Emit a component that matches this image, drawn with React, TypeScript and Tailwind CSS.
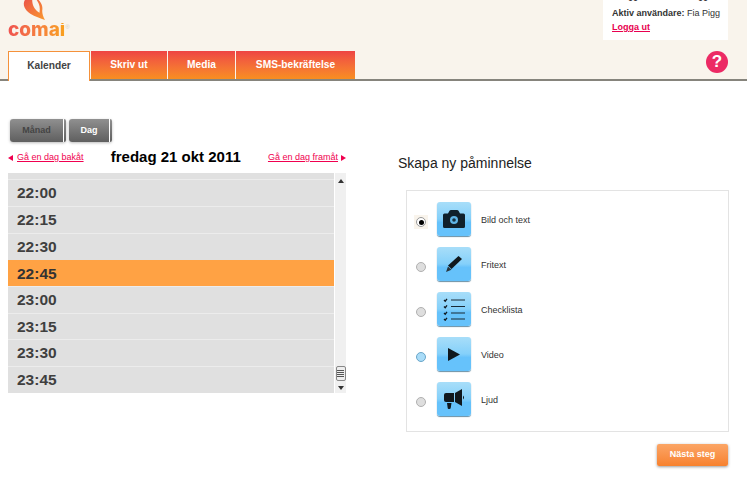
const times = [
  { t: "22:00", h: "h-[27px]" },
  { t: "22:15", h: "h-[27px]" },
  { t: "22:30", h: "h-[27px]" },
  { t: "22:45", h: "h-[26px]", active: true },
  { t: "23:00", h: "h-[27px]" },
  { t: "23:15", h: "h-[26px]" },
  { t: "23:30", h: "h-[27px]" },
  { t: "23:45", h: "h-[27px]" },
];

function CameraIcon() {
  return (
    <svg width="22" height="18" viewBox="0 0 22 18">
      <path d="M0 5q0-1.500 1.500-1.500h3.500L6.500.8Q7 0 8 0h6q1 0 1.500.8L17 3.500h3.500Q22 3.500 22 5v11.500q0 1.500-1.500 1.500h-19Q0 18 0 16.500z" fill="#10202b" />
      <circle cx="11" cy="10" r="4" fill="#5fb4e6" />
      <circle cx="11" cy="10" r="1.800" fill="#17303f" />
    </svg>
  );
}

function PenIcon() {
  return (
    <svg width="16" height="16" viewBox="0 0 16 16">
      <path d="M12.500 0L16 3 5.500 13 2 9.500z" fill="#10181d" />
      <path d="M2 10.500l3.500 3.200L0 16z" fill="#2a363d" />
    </svg>
  );
}

function ListIcon() {
  return (
    <svg width="22" height="24" viewBox="0 0 22 24" fill="none">
      <path d="M8 3h14M8 9.500h14M8 16h14M8 22h14" stroke="#1a2a35" strokeWidth="1" />
      <path d="M1 3l1.200 1.200L4 1.800M1 9.500l1.200 1.200L4 8.300M1 16l1.200 1.200L4 14.800M1 22l1.200 1.200L4 20.800" stroke="#10181d" strokeWidth="1.300" />
    </svg>
  );
}

function PlayIcon() {
  return (
    <svg width="12" height="13" viewBox="0 0 12 13">
      <path d="M0 0l12 6.500L0 13z" fill="#10181d" />
    </svg>
  );
}

function HornIcon() {
  return (
    <svg width="21" height="20" viewBox="0 0 21 20">
      <path d="M0 6q0-2 2-2h8v9H2q-2 0-2-2z" fill="#10181d" />
      <path d="M11 4l7-4v17l-7-4z" fill="#10181d" />
      <path d="M19 6.500q2 2 0 4z" fill="#10181d" />
      <path d="M3 14h4.500l-.8 5q-.2 1-1.200 1h-.8q-1 0-1-1z" fill="#10181d" />
    </svg>
  );
}

const options = [
  { label: "Bild och text", icon: <CameraIcon />, state: "checked" },
  { label: "Fritext", icon: <PenIcon />, state: "" },
  { label: "Checklista", icon: <ListIcon />, state: "" },
  { label: "Video", icon: <PlayIcon />, state: "hover" },
  { label: "Ljud", icon: <HornIcon />, state: "" },
];

function Radio({ state }: { state: string }) {
  if (state === "checked") {
    return (
      <span className="w-[14px] h-[14px] bg-[#f9f4ec] flex items-center justify-center">
        <span className="w-[10px] h-[10px] rounded-full bg-white border border-[#999] flex items-center justify-center">
          <span className="w-[5px] h-[5px] rounded-full bg-black" />
        </span>
      </span>
    );
  }
  return (
    <span className="w-[14px] h-[14px] flex items-center justify-center">
      <span
        className={
          state === "hover"
            ? "w-[10px] h-[10px] rounded-full border border-[#6aa6c9] bg-[#a9dcf8]"
            : "w-[10px] h-[10px] rounded-full border border-[#b0b0b0] bg-[#dedede]"
        }
      />
    </span>
  );
}

function ToggleButton({ label, width, textColor }: { label: string; width: string; textColor: string }) {
  return (
    <div className="flex h-[23px] rounded-[3px] shadow-[0_1px_3px_#bbb]">
      <span className={`${width} rounded-l-[3px] bg-gradient-to-b from-[#909090] to-[#5f5f5f] flex items-center justify-center text-[9px] font-bold ${textColor}`}>
        {label}
      </span>
      <span className="ml-[1px] w-[2px] rounded-r-[2px] bg-gradient-to-b from-[#909090] to-[#5f5f5f]" />
    </div>
  );
}

export default function App() {
  return (
    <div className="w-[747px] h-[481px] overflow-hidden bg-white font-['Liberation_Sans',Arial,sans-serif] text-[#333]">
      <header className="h-[81px] bg-[#f9f4ec] border-b-2 border-[#86847c] flex flex-col">
        <div className="h-[51px] shrink-0 flex justify-between">
          <div className="ml-[8px] w-[66px] h-[37px] flex flex-col items-start">
            <svg width="24" height="23" viewBox="0 0 24 23" className="ml-[14px]">
              <defs>
                <linearGradient id="logoFill" x1="0" y1="0" x2="1" y2="1">
                  <stop offset="0" stopColor="#ec5548" />
                  <stop offset="1" stopColor="#fa9a2e" />
                </linearGradient>
              </defs>
              <path d="M2 0C-1 5 2 11 8 15c5 3 11 5 16 7-2-4-3-7-3-10 1-5-1-9-4-12z" fill="url(#logoFill)" />
              <path d="M10 0c0 6 3 11 8 14 1-5 0-10-3-14z" fill="#f9f4ec" />
            </svg>
            <div className="mt-[2px] flex items-start">
              <span className="font-['Inter',sans-serif] text-[19px] leading-[14px] font-extrabold bg-gradient-to-r from-[#ef5350] to-[#f9a01b] bg-clip-text text-transparent">
                comai
              </span>
              <span className="text-[6px] leading-[8px] text-[#d8cfc0]">®</span>
            </div>
          </div>
          <div className="mr-[19px] w-[125px] h-[40px] bg-white px-[9px] overflow-hidden">
            <div className="-mt-[7px] flex justify-between pl-[16px] pr-[11px] text-[9px] leading-[10px] font-bold">
              <span>00</span>
              <span>00</span>
            </div>
            <p className="mt-[4px] text-[9px] leading-[12px] whitespace-nowrap">
              <span className="font-bold">Aktiv användare:</span> Fia Pigg
            </p>
            <a className="block mt-[3px] text-[9px] leading-[11px] font-bold underline text-[#e8004f]">Logga ut</a>
          </div>
        </div>
        <div className="flex justify-between">
          <nav className="ml-[8px] flex items-start text-[10.2px] font-bold text-white">
            <div className="w-[82px] h-[30px] pb-[2px] bg-white border border-b-0 border-[#f5913a] flex items-center justify-center text-[#444]">
              Kalender
            </div>
            <div className="ml-[1px] w-[76px] h-[28px] bg-gradient-to-b from-[#ee4343] to-[#f88e1f] flex items-center justify-center">
              Skriv ut
            </div>
            <div className="ml-[1px] w-[67px] h-[28px] bg-gradient-to-b from-[#ee4343] to-[#f88e1f] flex items-center justify-center">
              Media
            </div>
            <div className="ml-[1px] w-[119px] h-[28px] bg-gradient-to-b from-[#ee4343] to-[#f88e1f] flex items-center justify-center">
              SMS-bekräftelse
            </div>
          </nav>
          <div className="mr-[19px] w-[22px] h-[22px] rounded-full bg-[#ec2a64] text-white text-[17px] font-bold flex items-center justify-center">
            ?
          </div>
        </div>
      </header>

      <main className="flex">
        <section className="ml-[8px] w-[338px]">
          <div className="mt-[38px] ml-[2px] flex gap-[3px]">
            <ToggleButton label="Månad" width="w-[53px]" textColor="text-[#444]" />
            <ToggleButton label="Dag" width="w-[40px]" textColor="text-white" />
          </div>
          <div className="mt-[3px] mb-[3px] h-[25px] flex items-center justify-between">
            <div className="flex items-center gap-[4px] text-[9px] text-[#f0004f]">
              <span className="w-0 h-0 border-y-[3px] border-y-transparent border-r-[5px] border-r-[#f0004f]" />
              <a className="underline">Gå en dag bakåt</a>
            </div>
            <h2 className="text-[15px] font-bold text-black">fredag 21 okt 2011</h2>
            <div className="flex items-center gap-[3px] text-[9px] text-[#f0004f]">
              <a className="underline">Gå en dag framåt</a>
              <span className="w-0 h-0 border-y-[3px] border-y-transparent border-l-[5px] border-l-[#f0004f]" />
            </div>
          </div>
          <div className="h-[220px] flex">
            <div className="flex-1 bg-[#e0e0e0] pt-[6px] overflow-hidden">
              {times.map((row) => (
                <div
                  key={row.t}
                  className={`${row.h} pl-[9px] flex items-center text-[15.5px] font-bold border-t ${
                    row.active
                      ? "bg-[#ffa244] border-[#ffa244] text-[#333]"
                      : "border-[#ececec] text-[#3f3f3f]"
                  }`}
                >
                  {row.t}
                </div>
              ))}
            </div>
            <div className="ml-[1px] w-[11px] bg-[#f0f0f0] flex flex-col items-center pt-[6px] pb-[3px]">
              <span className="w-0 h-0 border-x-[3.500px] border-x-transparent border-b-[4px] border-b-[#333]" />
              <div className="flex-1" />
              <div className="w-[10px] h-[15px] bg-[#eee] border border-[#888] rounded-[2px] flex flex-col items-center justify-center gap-[1px]">
                <span className="w-[7px] h-[1px] bg-[#555]" />
                <span className="w-[7px] h-[1px] bg-[#555]" />
                <span className="w-[7px] h-[1px] bg-[#555]" />
                <span className="w-[7px] h-[1px] bg-[#555]" />
              </div>
              <span className="mt-[5px] w-0 h-0 border-x-[3.500px] border-x-transparent border-t-[4px] border-t-[#333]" />
            </div>
          </div>
        </section>

        <section className="ml-[52px] w-[331px]">
          <h1 className="mt-[74px] text-[14px] leading-[16px] text-[#222]">Skapa ny påminnelse</h1>
          <div className="mt-[19px] ml-[8px] w-[323px] h-[242px] border border-[#e3e3e3] pt-[11px] pl-[7px] flex flex-col gap-[11px]">
            {options.map((o) => (
              <div key={o.label} className="flex items-center h-[34px]">
                <div className="w-[14px] mt-[6px]">
                  <Radio state={o.state} />
                </div>
                <div className="ml-[9px] w-[34px] h-[34px] rounded-[3px] bg-gradient-to-b from-[#a8def9] via-[#84d0fa] via-50% to-[#66c2fb] to-60% shadow-[0_1px_1px_#6a8fa5] flex items-center justify-center">
                  {o.icon}
                </div>
                <span className="ml-[10px] mt-[4px] text-[9px] text-[#333]">{o.label}</span>
              </div>
            ))}
          </div>
          <div className="mt-[12px] mr-[1px] flex justify-end">
            <button className="w-[71px] h-[22px] rounded-[2px] bg-gradient-to-b from-[#fba565] to-[#f7812c] text-white text-[9px] font-bold shadow-[0_1px_3px_#999]">
              Nästa steg
            </button>
          </div>
        </section>
      </main>
    </div>
  );
}
